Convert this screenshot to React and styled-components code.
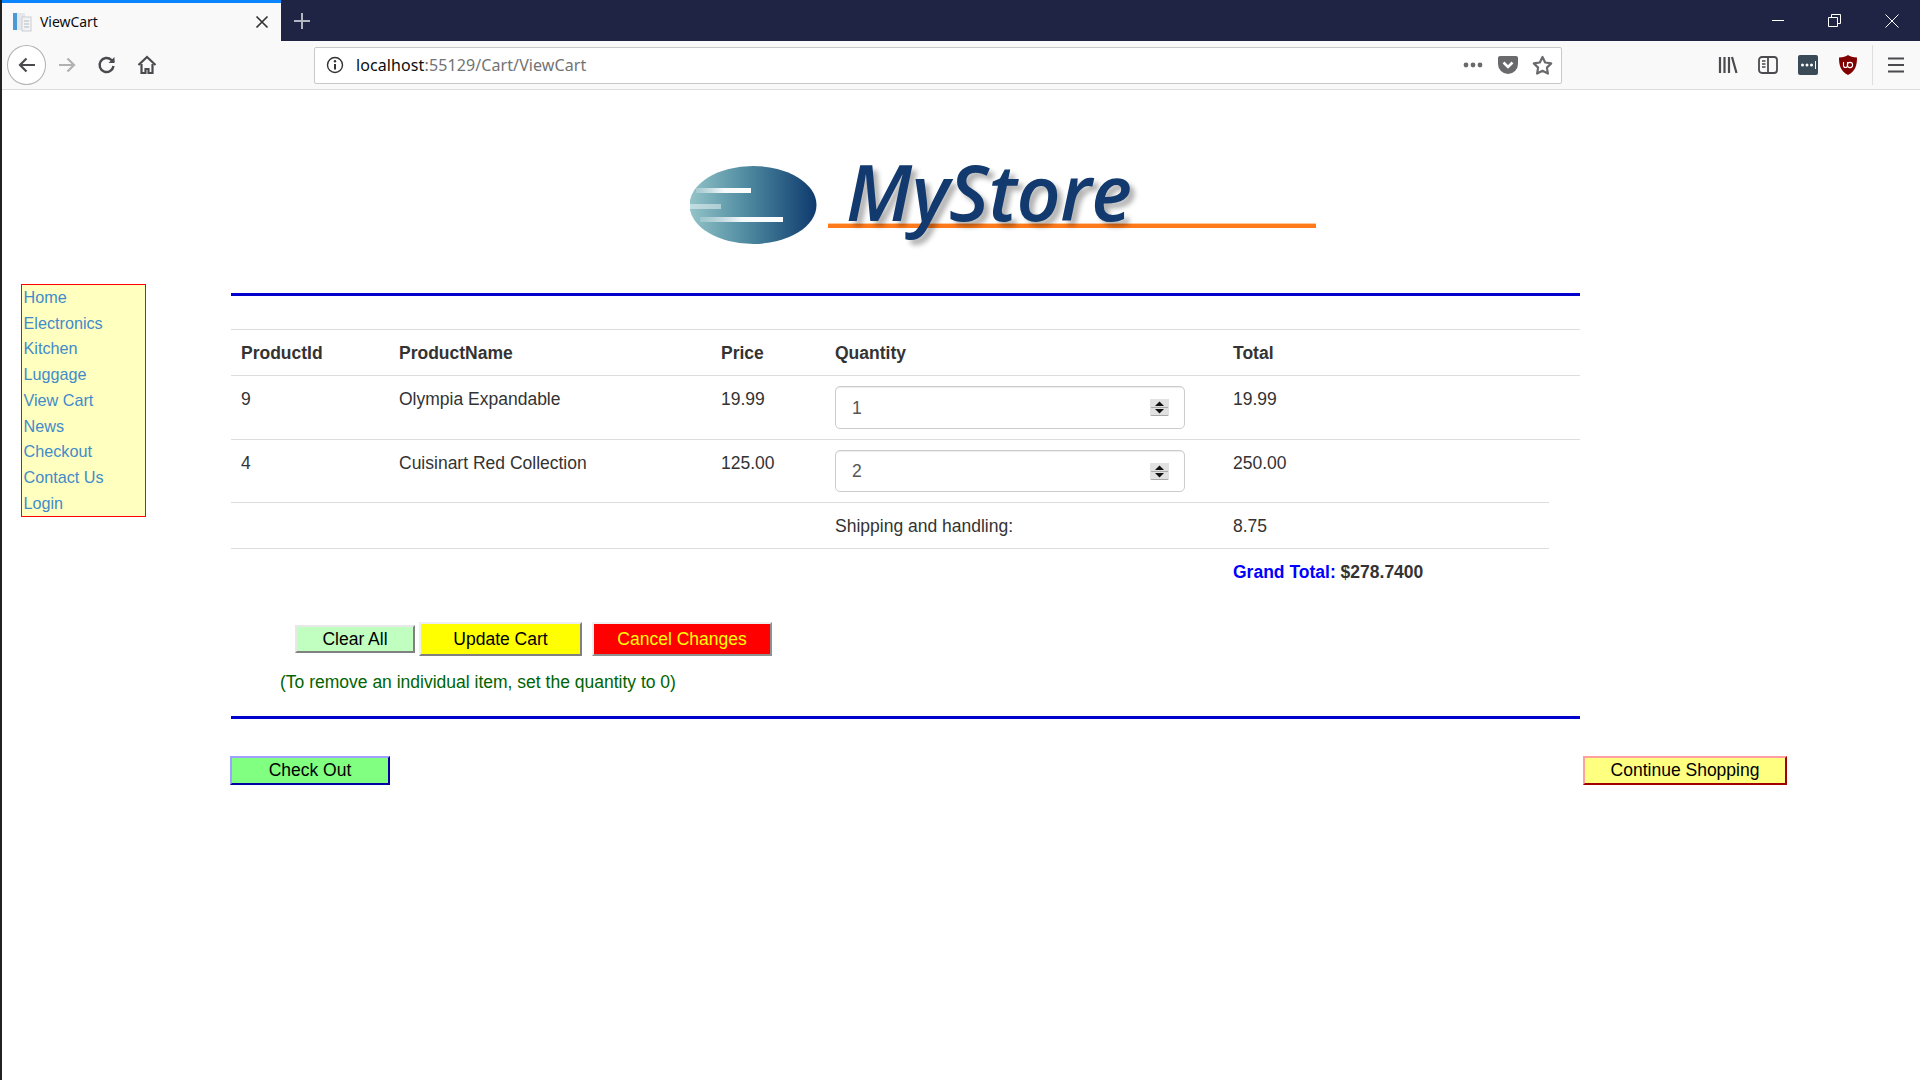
import React from 'react';
import styled, { createGlobalStyle } from 'styled-components';

const GlobalStyle = createGlobalStyle`
  html, body {
    margin: 0;
    padding: 0;
    background: #fff;
  }
  body {
    font-family: "Liberation Sans", Arial, sans-serif;
    font-size: 16px;
    color: #333;
  }
`;

const Window = styled.div`
  min-height: 1080px;
  box-sizing: border-box;
  border-left: 2px solid #222;
  background: #fff;
`;

/* browser chrome */
const TabBar = styled.div`
  display: flex;
  height: 41px;
  background: #1f2444;
`;
const Tab = styled.div`
  display: flex;
  align-items: center;
  box-sizing: border-box;
  width: 279px;
  padding-left: 10px;
  background: #f9f9fa;
  border-top: 3px solid #0a84ff;
`;
const TabTitle = styled.span`
  flex: 1;
  margin: -2px 0 0 8px;
  font-family: "Noto Sans", sans-serif;
  font-size: 14px;
  letter-spacing: -0.05px;
  color: #0c0c0d;
`;
const TabClose = styled.span`
  display: flex;
  margin-right: 12px;
  color: #333;
`;
const NewTab = styled.span`
  display: flex;
  align-items: center;
  justify-content: center;
  width: 42px;
  color: #b4b6c2;
`;
const Spacer = styled.div`
  flex: 1;
`;
const WinButton = styled.span`
  display: flex;
  align-items: center;
  justify-content: center;
  width: 57px;
  color: #fff;
`;
const NavBar = styled.div`
  display: flex;
  align-items: center;
  height: 48px;
  padding-left: 5px;
  background: #f9f9fa;
  border-bottom: 1px solid #dcdcdd;
`;
const NavIcon = styled.span`
  display: flex;
  flex: none;
  align-items: center;
  justify-content: center;
  width: 40px;
  height: 40px;
  color: ${(p) => p.$color || '#4a4a4f'};
`;
const BackCircle = styled(NavIcon)`
  box-sizing: border-box;
  width: 39px;
  margin-right: 1px;
  background: #fff;
  border: 1px solid #b1b1b3;
  border-radius: 50%;
`;
const UrlBar = styled.div`
  display: flex;
  flex: none;
  align-items: center;
  box-sizing: border-box;
  width: 1248px;
  height: 37px;
  margin: 0 146px 0 147px;
  padding: 0 1px 0 11px;
  background: #fff;
  border: 1px solid #c8c8c8;
  border-radius: 2px;
`;
const UrlText = styled.div`
  flex: 1;
  margin-left: 12px;
  font-family: "Noto Sans", sans-serif;
  font-size: 16px;
  letter-spacing: 0.1px;
  color: #737373;
`;
const UrlHost = styled.span`
  color: #0c0c0d;
`;
const UrlAction = styled.span`
  display: flex;
  align-items: center;
  justify-content: center;
  width: 35px;
  color: #6a6a6d;
`;
const Separator = styled.span`
  flex: none;
  width: 1px;
  height: 40px;
  margin: 0 3px 0 4px;
  background: #dedede;
`;

/* page */
const Page = styled.div`
  display: flex;
  align-items: flex-start;
`;
const SideMenu = styled.nav`
  display: flex;
  flex-direction: column;
  box-sizing: border-box;
  width: 125px;
  margin: 194px 85px 0 19px;
  padding: 0 1.5px;
  background: #ffffc0;
  border: 1px solid #ff0000;
`;
const MenuLink = styled.a`
  font-size: 16.2px;
  line-height: 25.7px;
  color: #428bca;
  text-decoration: none;
`;
const Content = styled.main`
  width: 1556px;
  font-size: 17.5px;
`;
const Masthead = styled.div`
  box-sizing: border-box;
  height: 203px;
  padding: 70px 0 0 459px;
`;
const LogoWrap = styled.div`
  position: relative;
  width: 630px;
  height: 95px;
`;
const LogoText = styled.span`
  position: absolute;
  left: 156px;
  top: -7px;
  font-family: "Open Sans", sans-serif;
  font-size: 77px;
  font-style: italic;
  font-weight: 600;
  line-height: 77px;
  letter-spacing: -0.4px;
  white-space: nowrap;
  color: #123a6e;
  text-shadow: 5px 5px 5px rgba(0, 0, 0, 0.3);
`;
const Rule = styled.div`
  width: 1349px;
  height: 3px;
  background: #0000cc;
`;
const CartTable = styled.table`
  width: 1349px;
  margin-top: 33px;
  table-layout: fixed;
  border-collapse: separate;
  border-spacing: 0;
  font-size: 17.5px;
  color: #333;
`;
const Col = styled.col`
  width: ${(p) => p.$w}px;
`;
const HeadCell = styled.th`
  padding: 12px 10px 10px;
  line-height: 23px;
  font-weight: bold;
  text-align: left;
  border-top: 1px solid #ddd;
`;
const Cell = styled.td`
  padding: ${(p) => (p.$field ? '10px' : '12px 10px 10px')};
  line-height: 23px;
  vertical-align: top;
  border-top: 1px solid #ddd;
`;
const QtyBox = styled.div`
  display: flex;
  align-items: center;
  box-sizing: border-box;
  width: 350px;
  height: ${(p) => p.$h}px;
  padding: 0 15px 0 16px;
  background: #fff;
  border: 1px solid #ccc;
  border-radius: 5px;
  box-shadow: inset 0 1px 1px rgba(0, 0, 0, 0.075);
`;
const QtyInput = styled.input`
  flex: 1;
  min-width: 0;
  padding: 1px 0 0;
  border: 0;
  outline: 0;
  background: transparent;
  font: inherit;
  color: #555;
`;
const GrandLabel = styled.span`
  font-weight: bold;
  color: #0000ff;
`;
const GrandValue = styled.span`
  font-weight: bold;
`;
const Actions = styled.div`
  display: flex;
  align-items: center;
  gap: 4px;
  margin: 28px 0 0 64px;
`;
const Button = styled.button`
  box-sizing: border-box;
  width: ${(p) => p.$w}px;
  height: ${(p) => p.$h}px;
  margin-right: ${(p) => p.$mr || 0}px;
  padding: 0;
  font-family: "Liberation Sans", Arial, sans-serif;
  font-size: 17.5px;
  color: ${(p) => p.$color || '#000'};
  background: ${(p) => p.$bg};
  border: 2px solid;
  border-color: ${(p) => p.$light} ${(p) => p.$dark} ${(p) => p.$dark} ${(p) => p.$light};
`;
const Note = styled.p`
  margin: 15px 0 0 49px;
  line-height: 23px;
  color: #006400;
`;
const LowerRule = styled(Rule)`
  margin-top: 22px;
`;
const BottomRow = styled.div`
  display: flex;
  justify-content: space-between;
  margin: 37px 0 0 -1px;
`;

const Svg = ({ size = 20, w, h, vb, children, ...rest }) => (
  <svg width={w || size} height={h || size} viewBox={vb || '0 0 20 20'} fill="none" stroke="currentColor" {...rest}>
    {children}
  </svg>
);

const Logo = () => (
  <LogoWrap>
    <svg width="630" height="95" viewBox="0 0 630 95">
      <defs>
        <linearGradient id="ball" x1="0" x2="1" y1="0" y2="0">
          <stop offset="0" stopColor="#93c4c8" />
          <stop offset="0.45" stopColor="#4e8aa0" />
          <stop offset="1" stopColor="#0e3a6e" />
        </linearGradient>
        <linearGradient id="fadeA" x1="0" x2="1" y1="0" y2="0">
          <stop offset="0" stopColor="#fff" stopOpacity="0.2" />
          <stop offset="0.5" stopColor="#fff" stopOpacity="0.95" />
          <stop offset="1" stopColor="#fff" />
        </linearGradient>
      </defs>
      <ellipse cx="63" cy="45" rx="63.5" ry="39" fill="url(#ball)" />
      <rect x="6" y="28" width="55" height="5" fill="url(#fadeA)" />
      <rect x="0" y="44" width="31" height="5" fill="#fff" fillOpacity="0.45" />
      <rect x="10" y="57" width="83" height="5" fill="url(#fadeA)" />
      <rect x="138" y="64" width="488" height="4" fill="#ff7a1a" />
      <rect x="138" y="63" width="488" height="1" fill="#ffc9a0" />
    </svg>
    <LogoText>MyStore</LogoText>
  </LogoWrap>
);

const Spinner = () => (
  <svg width="19" height="17" viewBox="0 0 19 17">
    <rect width="19" height="17" fill="#e1e1e1" />
    <rect x="1" y="8" width="17" height="1" fill="#a9a9a9" />
    <rect x="1" y="16" width="17" height="1" fill="#a9a9a9" />
    <path d="M9.5 2.5 14 7H5Z" fill="#111" />
    <path d="M5 10h9l-4.5 4.5Z" fill="#111" />
  </svg>
);

const QtyField = ({ value, height }) => (
  <QtyBox $h={height}>
    <QtyInput type="text" value={value} readOnly />
    <Spinner />
  </QtyBox>
);

const menu = ['Home', 'Electronics', 'Kitchen', 'Luggage', 'View Cart', 'News', 'Checkout', 'Contact Us', 'Login'];

const items = [
  { id: 9, name: 'Olympia Expandable', price: '19.99', qty: 1, total: '19.99', h: 43 },
  { id: 4, name: 'Cuisinart Red Collection', price: '125.00', qty: 2, total: '250.00', h: 42 },
];

const App = () => {
  return (
    <Window>
      <GlobalStyle />
      <TabBar>
        <Tab>
          <svg width="20" height="20" viewBox="0 0 20 20">
            <rect x="1" y="1" width="4" height="17" fill="#4a9ad8" />
            <rect x="5" y="1" width="8" height="17" fill="#e4e8ec" />
            <rect x="10" y="5" width="9" height="14" fill="#f2f3f5" stroke="#c9ced3" />
            <path d="M12 9h5M12 12h5M12 15h5" stroke="#b5bbc2" />
          </svg>
          <TabTitle>ViewCart</TabTitle>
          <TabClose>
            <Svg size={14} vb="0 0 14 14" strokeWidth="1.7">
              <path d="M1.5 1.5l11 11M12.5 1.5l-11 11" />
            </Svg>
          </TabClose>
        </Tab>
        <NewTab>
          <Svg size={18} vb="0 0 18 18" strokeWidth="2">
            <path d="M9 1v16M1 9h16" />
          </Svg>
        </NewTab>
        <Spacer />
        <WinButton>
          <Svg size={12} vb="0 0 12 12">
            <path d="M0 5.5h12" />
          </Svg>
        </WinButton>
        <WinButton>
          <Svg size={13} vb="0 0 13 13">
            <path d="M.5 3.5h9v9h-9zM3.5 3.5v-3h9v9h-3" />
          </Svg>
        </WinButton>
        <WinButton>
          <Svg size={14} vb="0 0 14 14">
            <path d="M.5.5l13 13M13.5.5l-13 13" />
          </Svg>
        </WinButton>
      </TabBar>
      <NavBar>
        <BackCircle>
          <Svg size={20} strokeWidth="2.2">
            <path d="M18 10H3M9.5 3.5 3 10l6.5 6.5" />
          </Svg>
        </BackCircle>
        <NavIcon $color="#b1b1b3">
          <Svg size={20} strokeWidth="2.2">
            <path d="M2 10h15M10.5 3.5 17 10l-6.5 6.5" />
          </Svg>
        </NavIcon>
        <NavIcon>
          <Svg size={20} strokeWidth="2.4">
            <path d="M16.5 11a7 7 0 1 1-2.2-6.2L17 7" />
            <path d="M17.5 2v6h-6Z" fill="currentColor" stroke="none" />
          </Svg>
        </NavIcon>
        <NavIcon>
          <Svg size={20} strokeWidth="2.2">
            <path d="M1.5 10 10 2l8.500 8" />
            <path d="M4.500 9v9h4v-4h3v4h4V9" />
          </Svg>
        </NavIcon>
        <UrlBar>
          <Svg size={18} vb="0 0 18 18" strokeWidth="1.4">
            <circle cx="9" cy="9" r="7.500" />
            <path d="M9 8v5.500" strokeWidth="2" />
            <circle cx="9" cy="5.200" r="1.200" fill="currentColor" stroke="none" />
          </Svg>
          <UrlText>
            <UrlHost>localhost</UrlHost>:55129/Cart/ViewCart
          </UrlText>
          <UrlAction>
            <svg width="20" height="6" viewBox="0 0 20 6" fill="currentColor">
              <circle cx="3" cy="3" r="2.400" />
              <circle cx="10" cy="3" r="2.400" />
              <circle cx="17" cy="3" r="2.400" />
            </svg>
          </UrlAction>
          <UrlAction>
            <svg width="20" height="18" viewBox="0 0 20 18">
              <path d="M2 0h16a2 2 0 0 1 2 2v6a10 10 0 0 1-20 0V2a2 2 0 0 1 2-2Z" fill="currentColor" />
              <path d="M5.500 6.500 10 11l4.500-4.500" fill="none" stroke="#fff" strokeWidth="2.600" />
            </svg>
          </UrlAction>
          <UrlAction>
            <Svg size={21} vb="0 0 21 21" strokeWidth="2.200" strokeLinejoin="round">
              <path d="M10.500 2l2.700 5.500 6 .9-4.300 4.200 1 6-5.400-2.800-5.400 2.800 1-6L1.800 8.400l6-.9Z" />
            </Svg>
          </UrlAction>
        </UrlBar>
        <NavIcon>
          <Svg size={20} strokeWidth="2.200">
            <path d="M2 2v16M6.500 2v16M11 2v16M14 2l4.500 16" />
          </Svg>
        </NavIcon>
        <NavIcon>
          <Svg size={20} strokeWidth="1.800">
            <rect x="1" y="2" width="18" height="16" rx="3" />
            <path d="M10 2v16" />
            <path d="M4 6h3.500M4 9h3.500M4 12h3.500" strokeWidth="1.400" />
          </Svg>
        </NavIcon>
        <NavIcon>
          <svg width="20" height="20" viewBox="0 0 20 20">
            <rect width="20" height="20" rx="2" fill="#3b4a57" />
            <circle cx="4.500" cy="10" r="1.500" fill="#fff" />
            <circle cx="9" cy="10" r="1.500" fill="#fff" />
            <circle cx="13.500" cy="10" r="1.500" fill="#fff" />
            <path d="M17.500 6v8" stroke="#fff" />
          </svg>
        </NavIcon>
        <NavIcon>
          <svg width="18" height="20" viewBox="0 0 18 20">
            <path d="M9 0c2 1.500 5 2.300 9 2.500 0 8-1.500 13.500-9 17.500C1.500 16 0 10.500 0 2.500 4 2.300 7 1.500 9 0Z" fill="#800000" />
            <path d="M4.500 7v3.500a2 2 0 0 0 4 0V7" fill="none" stroke="#fff" strokeWidth="1.100" />
            <circle cx="11" cy="10" r="2.600" fill="none" stroke="#fff" strokeWidth="1.100" />
          </svg>
        </NavIcon>
        <Separator />
        <NavIcon>
          <Svg size={18} vb="0 0 18 18" strokeWidth="2.200">
            <path d="M1 2.500h16M1 9h16M1 15.500h16" />
          </Svg>
        </NavIcon>
      </NavBar>

      <Page>
        <SideMenu>
          {menu.map((label) => (
            <MenuLink key={label} href="#">
              {label}
            </MenuLink>
          ))}
        </SideMenu>
        <Content>
          <Masthead>
            <Logo />
          </Masthead>
          <Rule />
          <CartTable>
            <colgroup>
              <Col $w={158} />
              <Col $w={322} />
              <Col $w={114} />
              <Col $w={398} />
              <Col $w={326} />
              <Col $w={31} />
            </colgroup>
            <thead>
              <tr>
                <HeadCell>ProductId</HeadCell>
                <HeadCell>ProductName</HeadCell>
                <HeadCell>Price</HeadCell>
                <HeadCell>Quantity</HeadCell>
                <HeadCell colSpan={2}>Total</HeadCell>
              </tr>
            </thead>
            <tbody>
              {items.map((item) => (
                <tr key={item.id}>
                  <Cell>{item.id}</Cell>
                  <Cell>{item.name}</Cell>
                  <Cell>{item.price}</Cell>
                  <Cell $field>
                    <QtyField value={item.qty} height={item.h} />
                  </Cell>
                  <Cell colSpan={2}>{item.total}</Cell>
                </tr>
              ))}
              <tr>
                <Cell />
                <Cell />
                <Cell />
                <Cell>Shipping and handling:</Cell>
                <Cell>8.75</Cell>
              </tr>
              <tr>
                <Cell />
                <Cell />
                <Cell />
                <Cell />
                <Cell>
                  <GrandLabel>Grand Total: </GrandLabel>
                  <GrandValue>$278.7400</GrandValue>
                </Cell>
              </tr>
            </tbody>
          </CartTable>
          <Actions>
            <Button $w={120} $h={28} $bg="#c0ffc0" $light="#e8e8e8" $dark="#808080">
              Clear All
            </Button>
            <Button $w={163} $h={34} $mr={6} $bg="#ffff00" $light="#efefef" $dark="#808080">
              Update Cart
            </Button>
            <Button $w={180} $h={34} $bg="#ff0000" $color="#ffff00" $light="#efefef" $dark="#909090">
              Cancel Changes
            </Button>
          </Actions>
          <Note>(To remove an individual item, set the quantity to 0)</Note>
          <LowerRule />
          <BottomRow>
            <Button $w={160} $h={29} $bg="#80ff80" $light="#a0a0ff" $dark="#0000a0">
              Check Out
            </Button>
            <Button $w={204} $h={29} $bg="#ffff80" $light="#ffa0a0" $dark="#a00000">
              Continue Shopping
            </Button>
          </BottomRow>
        </Content>
      </Page>
    </Window>
  );
};

export default App;
